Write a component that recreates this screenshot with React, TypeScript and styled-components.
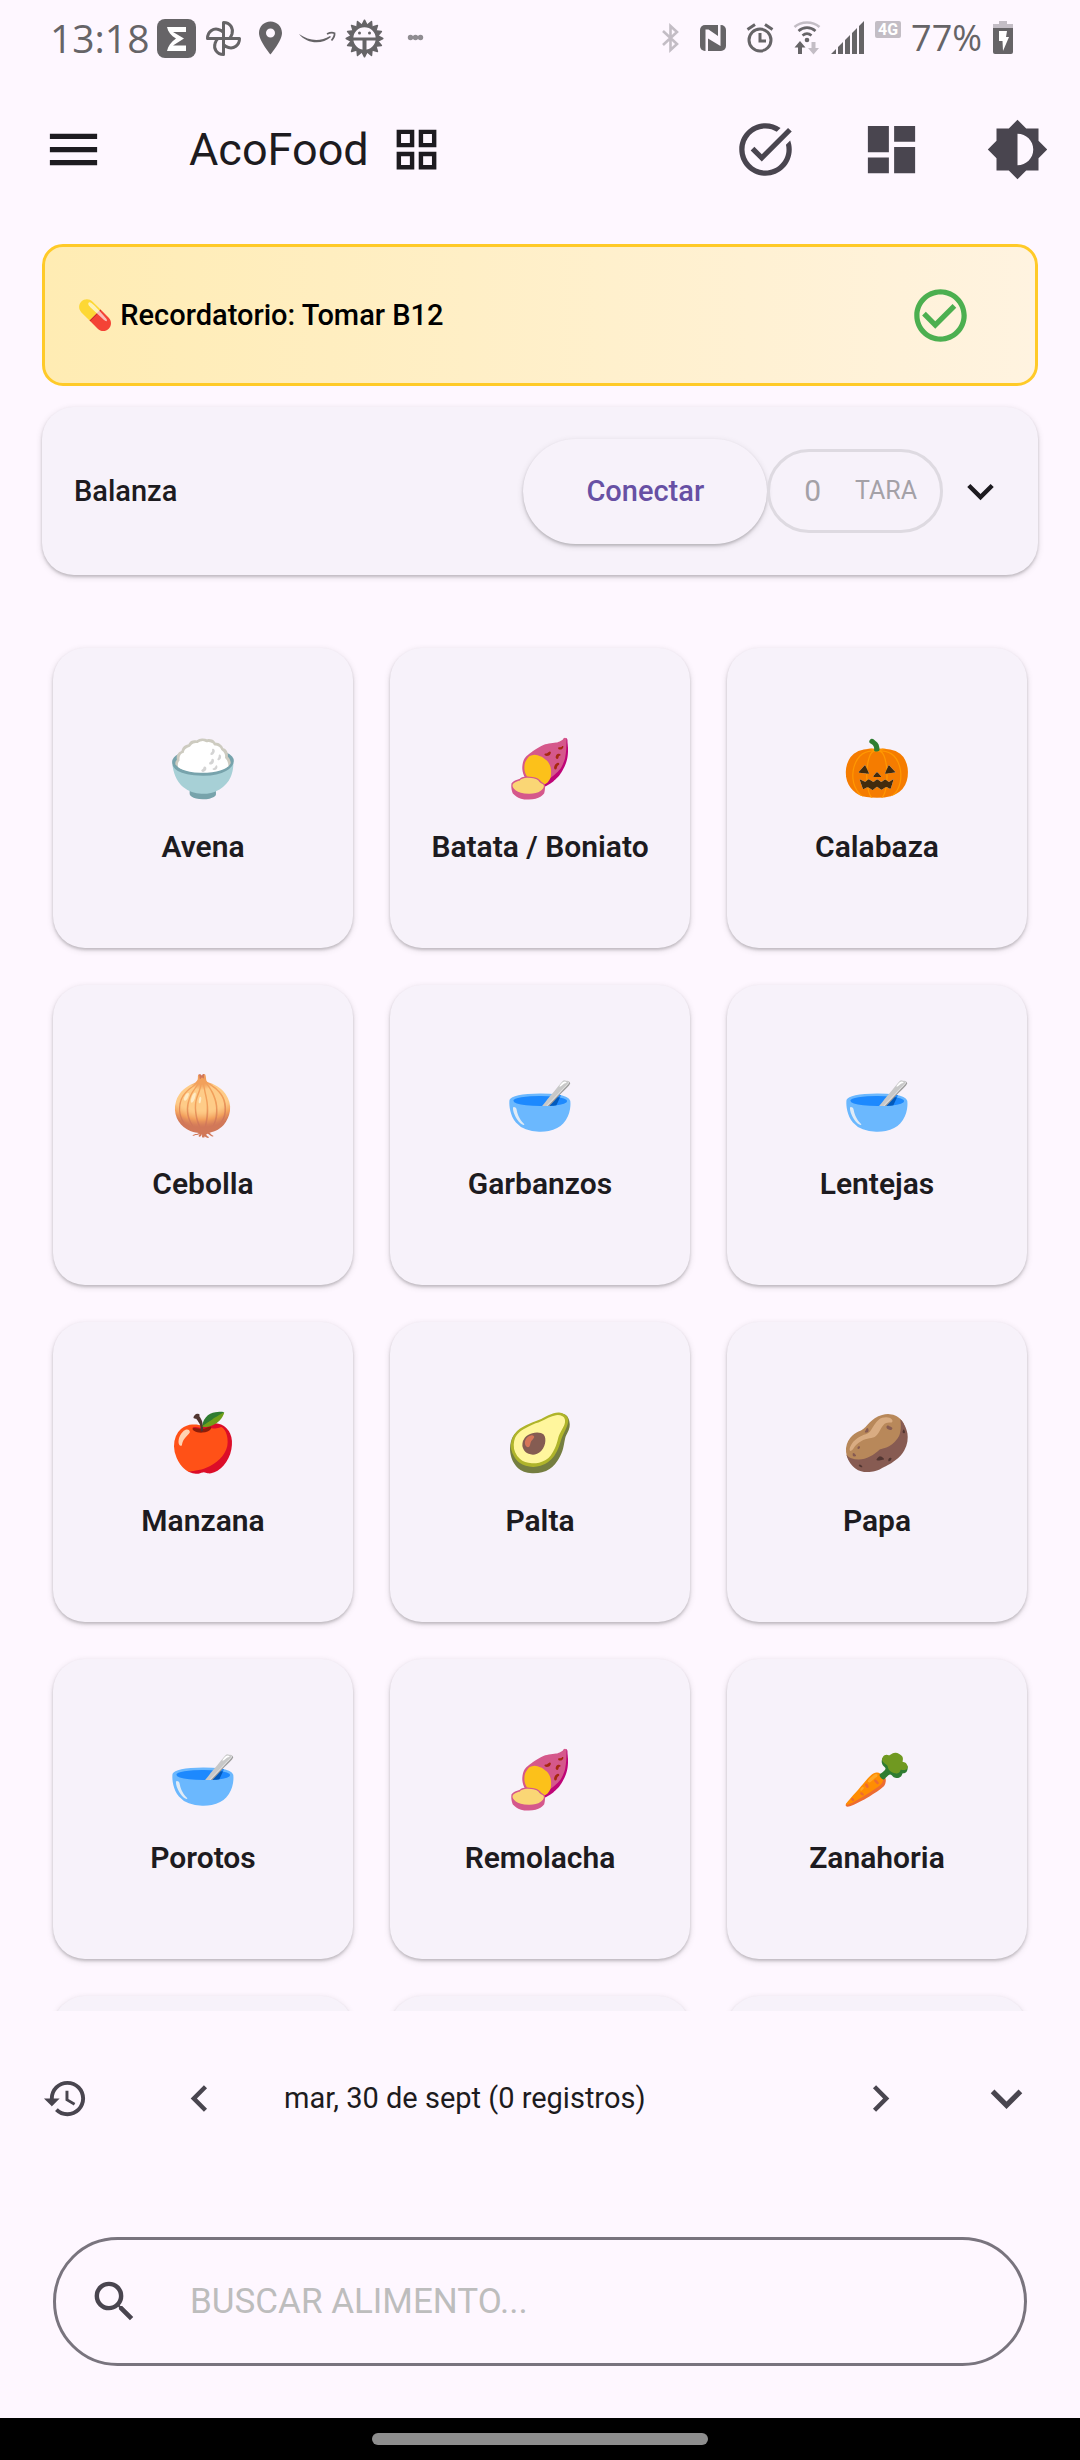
import React from "react";
import styled, { createGlobalStyle } from "styled-components";
import {
  MdMenu,
  MdOutlineGridView,
  MdTaskAlt,
  MdDashboard,
  MdBrightness6,
  MdCheckCircleOutline,
  MdExpandMore,
  MdHistory,
  MdChevronLeft,
  MdChevronRight,
  MdSearch,
} from "react-icons/md";

const color = {
  page: "#fef7ff",
  card: "#f7f2fa",
  ink: "#1d1b20",
  icon: "#49454f",
  status: "#666467",
  statusPale: "#c3bdc5",
  accent: "#6750a4",
};

const GlobalStyle = createGlobalStyle`
  * { box-sizing: border-box; }
  body { margin: 0; background: ${color.page}; }
  button { font: inherit; margin: 0; cursor: pointer; }
`;

const Screen = styled.div`
  display: flex;
  flex-direction: column;
  height: 100vh;
  background: ${color.page};
  color: ${color.ink};
  font-family: Roboto, "Noto Color Emoji", sans-serif;
`;

/* Status bar */

const StatusBar = styled.div`
  display: flex;
  align-items: center;
  justify-content: space-between;
  height: 76px;
  padding: 0 66px 0 50px;
  color: ${color.status};
  font-family: "Open Sans", "Noto Sans", sans-serif;
  font-weight: 500;
`;

const StatusGroup = styled.div<{ $gap: number }>`
  display: flex;
  align-items: center;
  gap: ${(p) => p.$gap}px;
`;

const StatusText = styled.span<{ $size: number }>`
  font-size: ${(p) => p.$size}px;
  line-height: 40px;
`;

const NetworkBadge = styled.span`
  align-self: flex-start;
  margin-top: 3px;
  padding: 0 3px;
  border-radius: 2px;
  background: ${color.statusPale};
  color: #fff;
  font-family: Roboto, sans-serif;
  font-size: 16px;
  font-weight: 700;
  line-height: 17px;
`;

/* App bar */

const AppBar = styled.header`
  display: flex;
  align-items: center;
  height: 147px;
`;

const IconButton = styled.button<{ $width: number; $size: number; $color?: string }>`
  display: flex;
  align-items: center;
  justify-content: center;
  flex: none;
  width: ${(p) => p.$width}px;
  height: 126px;
  padding: 0;
  border: 0;
  background: none;
  color: ${(p) => p.$color ?? color.icon};

  svg {
    width: ${(p) => p.$size}px;
    height: ${(p) => p.$size}px;
  }
`;

const Title = styled.h1`
  display: flex;
  align-items: center;
  gap: 21px;
  flex: 1;
  margin: 0;
  padding-left: 42px;
  font-size: 45px;
  font-weight: 400;
  line-height: 60px;

  svg {
    width: 53px;
    height: 53px;
  }
`;

/* Reminder and scale panels */

const Panels = styled.div`
  display: flex;
  flex-direction: column;
  gap: 21px;
  padding: 21px 42px 0;
`;

const Reminder = styled.section`
  display: flex;
  align-items: center;
  justify-content: space-between;
  height: 142px;
  padding: 0 32px;
  border: 3px solid #ffca28;
  border-radius: 21px;
  background: linear-gradient(90deg, #ffecb3, #fff3e0);
  color: #000;
`;

const ReminderText = styled.p`
  margin: 0;
  font-size: 29px;
  font-weight: 500;
  line-height: 36px;
`;

const shadow = "0 2px 3px rgba(0, 0, 0, 0.18), 0 2px 7px rgba(0, 0, 0, 0.12)";

const ScalePanel = styled.section`
  display: flex;
  align-items: center;
  height: 168px;
  padding: 0 21px 0 32px;
  border-radius: 32px;
  background: ${color.card};
  box-shadow: ${shadow};
`;

const ScaleName = styled.h2`
  flex: 1;
  margin: 0;
  font-size: 29px;
  font-weight: 500;
  line-height: 40px;
`;

const ConnectButton = styled.button`
  && {
    height: 105px;
    padding: 0 63px;
    border: 0;
    border-radius: 53px;
    background: ${color.card};
    box-shadow: ${shadow};
    color: ${color.accent};
    font-size: 29px;
    font-weight: 500;
    line-height: 40px;
  }
`;

const TareButton = styled.button`
  && {
    display: flex;
    align-items: center;
    gap: 34px;
    height: 84px;
    padding: 0 23px 0 34px;
    border: 3px solid #dedae1;
    border-radius: 42px;
    background: none;
    color: #a4a1a7;
    font-size: 30px;
    font-weight: 400;
    line-height: 40px;
  }
`;

const TareLabel = styled.span`
  font-size: 25px;
`;

/* Food grid */

const FoodArea = styled.main`
  flex: 1;
  min-height: 0;
  overflow: hidden;
  padding: 73px 53px 0;
`;

const FoodGrid = styled.div`
  display: grid;
  grid-template-columns: repeat(3, 1fr);
  gap: 37px;
`;

const FoodCard = styled.button`
  && {
    display: flex;
    flex-direction: column;
    align-items: center;
    justify-content: center;
    gap: 24px;
    aspect-ratio: 1;
    padding: 6px 0 0;
    border: 0;
    border-radius: 32px;
    background: ${color.card};
    box-shadow: ${shadow};
    color: ${color.ink};
  }
`;

const FoodEmoji = styled.span`
  font-size: 56px;
  line-height: 68px;
`;

const FoodName = styled.span`
  font-size: 30px;
  font-weight: 600;
  line-height: 40px;
`;

/* Day navigation */

const DayBar = styled.nav`
  display: flex;
  align-items: center;
  height: 174px;
  padding: 0 11px 0 2px;
`;

const DayLabel = styled.span`
  flex: 1;
  padding-left: 14px;
  font-size: 29px;
  line-height: 36px;
`;

/* Search */

const SearchBox = styled.label`
  display: flex;
  align-items: center;
  gap: 49px;
  height: 129px;
  margin: 52px 53px;
  padding: 0 32px;
  border: 3px solid #79747e;
  border-radius: 65px;
  color: ${color.icon};

  svg {
    flex: none;
    width: 53px;
    height: 53px;
  }
`;

const SearchInput = styled.input`
  flex: 1;
  min-width: 0;
  padding: 0;
  border: 0;
  outline: 0;
  background: none;
  color: ${color.ink};
  font-family: inherit;
  font-size: 35px;
  line-height: 48px;

  &::placeholder {
    color: #bdbdbd;
    opacity: 1;
  }
`;

/* Gesture bar */

const GestureBar = styled.div`
  display: flex;
  align-items: center;
  justify-content: center;
  height: 42px;
  background: #000;
`;

const GesturePill = styled.div`
  width: 336px;
  height: 12px;
  border-radius: 6px;
  background: #8e8e8e;
`;

const gearTeeth = Array.from({ length: 16 }, (_, i) => (i * 360) / 16);

const SigmaIcon = () => (
  <svg width="39" height="39" viewBox="0 0 39 39">
    <rect width="39" height="39" rx="8" fill={color.status} />
    <path d="M10 8h19v5H16l11 6.500-11 7h13v5.500H10c1-5 4-9 9-12.500-5-3-8-6.500-9-11.500z" fill="#fff" />
  </svg>
);

const PinwheelIcon = () => (
  <svg width="39" height="39" viewBox="0 0 39 39" fill="none" stroke={color.status} strokeWidth="3" strokeLinejoin="round">
    <path d="M19.500 19.500V3.500c7 0 10 6 8.500 11.500M19.500 19.500H3.500c0-7 6-10.500 11-9 3 .8 5 3 5 3M19.500 19.500v16c-7 0-10-6-8.500-11 .8-3 3-5 3-5M19.500 19.500h16c0 7-6 10.500-11 9-3-.8-5-3-5-3M28 15c-.8 2.500-2.500 4.500-2.500 4.500" />
  </svg>
);

const PlaceIcon = () => (
  <svg width="39" height="39" viewBox="0 0 39 39">
    <path d="M19.500 2.500C13 2.500 8 7.500 8 14c0 8 11.500 21.500 11.500 21.500S31 22 31 14c0-6.500-5-11.500-11.500-11.500zm0 16a4.500 4.500 0 1 1 0-9 4.500 4.500 0 0 1 0 9z" fill={color.status} />
  </svg>
);

const SmileArrowIcon = () => (
  <svg width="39" height="39" viewBox="0 0 39 39">
    <path d="M1 15c10 7 21 8 31 2l1 1C24 26 9 25 1 15z" fill={color.status} />
    <path d="M29 15c3-1.500 6-1.500 7.500-.8.300 2-.5 4.500-3 7.300" fill="none" stroke={color.status} strokeWidth="1.800" />
  </svg>
);

const GearFaceIcon = () => (
  <svg width="39" height="39" viewBox="0 0 39 39" fill={color.status}>
    {gearTeeth.map((a) => (
      <path key={a} d="M17.500 5l2-3.800 2 3.800z" stroke={color.status} strokeWidth="1.500" strokeLinejoin="round" transform={`rotate(${a} 19.5 19.5)`} />
    ))}
    <circle cx="19.5" cy="19.5" r="13" fill="none" stroke={color.status} strokeWidth="3.600" />
    <path d="M7 18.500h25v3H21.500V32h-4V21.500H7z" />
    <circle cx="14.500" cy="14" r="1.500" />
    <circle cx="24.500" cy="14" r="1.500" />
  </svg>
);

const DotsIcon = () => (
  <svg width="39" height="39" viewBox="0 0 39 39" fill="#8f8c91">
    <circle cx="18.500" cy="18.500" r="2.700" />
    <circle cx="23.500" cy="18.500" r="2.700" />
    <circle cx="28.500" cy="18.500" r="2.700" />
  </svg>
);

const BluetoothIcon = () => (
  <svg width="18" height="34" viewBox="0 0 18 34" fill="none" stroke={color.statusPale} strokeWidth="2.600">
    <path d="M1 10l14 13-6.500 6V5l6.500 6L1 24" />
  </svg>
);

const NfcIcon = () => (
  <svg width="28" height="28" viewBox="0 0 28 28">
    <rect x="1" y="1" width="26" height="26" rx="5" fill={color.status} />
    <path d="M9.500 5.500L19 12V0h2.500v22L9 14.500V28H6.500V5.500z" fill={color.page} />
  </svg>
);

const AlarmIcon = () => (
  <svg width="28" height="30" viewBox="0 0 28 30" fill="none" stroke={color.status} strokeWidth="3">
    <circle cx="14" cy="17" r="11" />
    <path d="M14 10v8h6M1.500 6.500L9 1.500M26.500 6.500L19 1.500" />
  </svg>
);

const WifiIcon = () => (
  <svg width="28" height="36" viewBox="0 0 28 36">
    <g fill="none" strokeWidth="2.600">
      <path d="M1.500 7c7-6 18-6 25 0" stroke={color.statusPale} />
      <path d="M5.500 11c5-4.500 12-4.500 17 0M9.500 15.500c3-2.500 6-2.500 9 0" stroke={color.status} />
    </g>
    <circle cx="14" cy="20" r="2.300" fill={color.status} />
    <path d="M7 21l5.500 6.500H9V34H5v-6.500H1.500z" fill={color.status} />
    <path d="M20.500 34.500L15 28h3.500v-6h4v6H26z" fill={color.statusPale} />
  </svg>
);

const SignalIcon = () => (
  <svg width="34" height="34" viewBox="0 0 34 34" fill={color.status}>
    <path d="M0 33l5-5v5zM7 33V26l5-5v12zM14 33V19l5-5v19zM21 33V12l5-5v26zM28 33V5l5-5v33z" />
  </svg>
);

const BatteryIcon = () => (
  <svg width="22" height="34" viewBox="0 0 22 34">
    <path d="M7 0h8v3h6v4H1V3h6z" fill={color.statusPale} />
    <path d="M1 7h20v24a2 2 0 0 1-2 2H3a2 2 0 0 1-2-2z" fill={color.status} />
    <path d="M7 10h8l-1 6h3l-6 14-.5-10H7z" fill="#fff" />
  </svg>
);

const foods = [
  { emoji: "🍚", name: "Avena" },
  { emoji: "🍠", name: "Batata / Boniato" },
  { emoji: "🎃", name: "Calabaza" },
  { emoji: "🧅", name: "Cebolla" },
  { emoji: "🥣", name: "Garbanzos" },
  { emoji: "🥣", name: "Lentejas" },
  { emoji: "🍎", name: "Manzana" },
  { emoji: "🥑", name: "Palta" },
  { emoji: "🥔", name: "Papa" },
  { emoji: "🥣", name: "Porotos" },
  { emoji: "🍠", name: "Remolacha" },
  { emoji: "🥕", name: "Zanahoria" },
];

export default function App() {
  return (
    <Screen>
      <GlobalStyle />
      <StatusBar>
        <StatusGroup $gap={8}>
          <StatusText $size={39}>13:18</StatusText>
          <SigmaIcon />
          <PinwheelIcon />
          <PlaceIcon />
          <SmileArrowIcon />
          <GearFaceIcon />
          <DotsIcon />
        </StatusGroup>
        <StatusGroup $gap={10}>
          <StatusGroup $gap={19}>
            <BluetoothIcon />
            <NfcIcon />
            <AlarmIcon />
            <WifiIcon />
          </StatusGroup>
          <SignalIcon />
          <NetworkBadge>4G</NetworkBadge>
          <StatusText $size={36}>77%</StatusText>
          <BatteryIcon />
        </StatusGroup>
      </StatusBar>

      <AppBar>
        <IconButton $width={147} $size={63} $color={color.ink} aria-label="Menú">
          <MdMenu />
        </IconButton>
        <Title>
          AcoFood
          <MdOutlineGridView />
        </Title>
        <IconButton $width={126} $size={63} aria-label="Tareas">
          <MdTaskAlt />
        </IconButton>
        <IconButton $width={126} $size={63} aria-label="Panel">
          <MdDashboard />
        </IconButton>
        <IconButton $width={126} $size={63} aria-label="Tema">
          <MdBrightness6 />
        </IconButton>
      </AppBar>

      <Panels>
        <Reminder>
          <ReminderText>💊 Recordatorio: Tomar B12</ReminderText>
          <IconButton $width={126} $size={63} $color="#4caf50" aria-label="Hecho">
            <MdCheckCircleOutline />
          </IconButton>
        </Reminder>
        <ScalePanel>
          <ScaleName>Balanza</ScaleName>
          <ConnectButton>Conectar</ConnectButton>
          <TareButton>
            0<TareLabel>TARA</TareLabel>
          </TareButton>
          <IconButton $width={74} $size={53} $color={color.ink} aria-label="Expandir balanza">
            <MdExpandMore />
          </IconButton>
        </ScalePanel>
      </Panels>

      <FoodArea>
        <FoodGrid>
          {foods.map((food) => (
            <FoodCard key={food.name}>
              <FoodEmoji>{food.emoji}</FoodEmoji>
              <FoodName>{food.name}</FoodName>
            </FoodCard>
          ))}
          <FoodCard as="div" />
          <FoodCard as="div" />
          <FoodCard as="div" />
        </FoodGrid>
      </FoodArea>

      <DayBar>
        <IconButton $width={126} $size={47} aria-label="Historial">
          <MdHistory />
        </IconButton>
        <IconButton $width={142} $size={53} aria-label="Día anterior">
          <MdChevronLeft />
        </IconButton>
        <DayLabel>mar, 30 de sept (0 registros)</DayLabel>
        <IconButton $width={126} $size={53} aria-label="Día siguiente">
          <MdChevronRight />
        </IconButton>
        <IconButton $width={126} $size={63} aria-label="Expandir registros">
          <MdExpandMore />
        </IconButton>
      </DayBar>

      <SearchBox>
        <MdSearch />
        <SearchInput type="text" placeholder="BUSCAR ALIMENTO..." aria-label="Buscar alimento" />
      </SearchBox>

      <GestureBar>
        <GesturePill />
      </GestureBar>
    </Screen>
  );
}
